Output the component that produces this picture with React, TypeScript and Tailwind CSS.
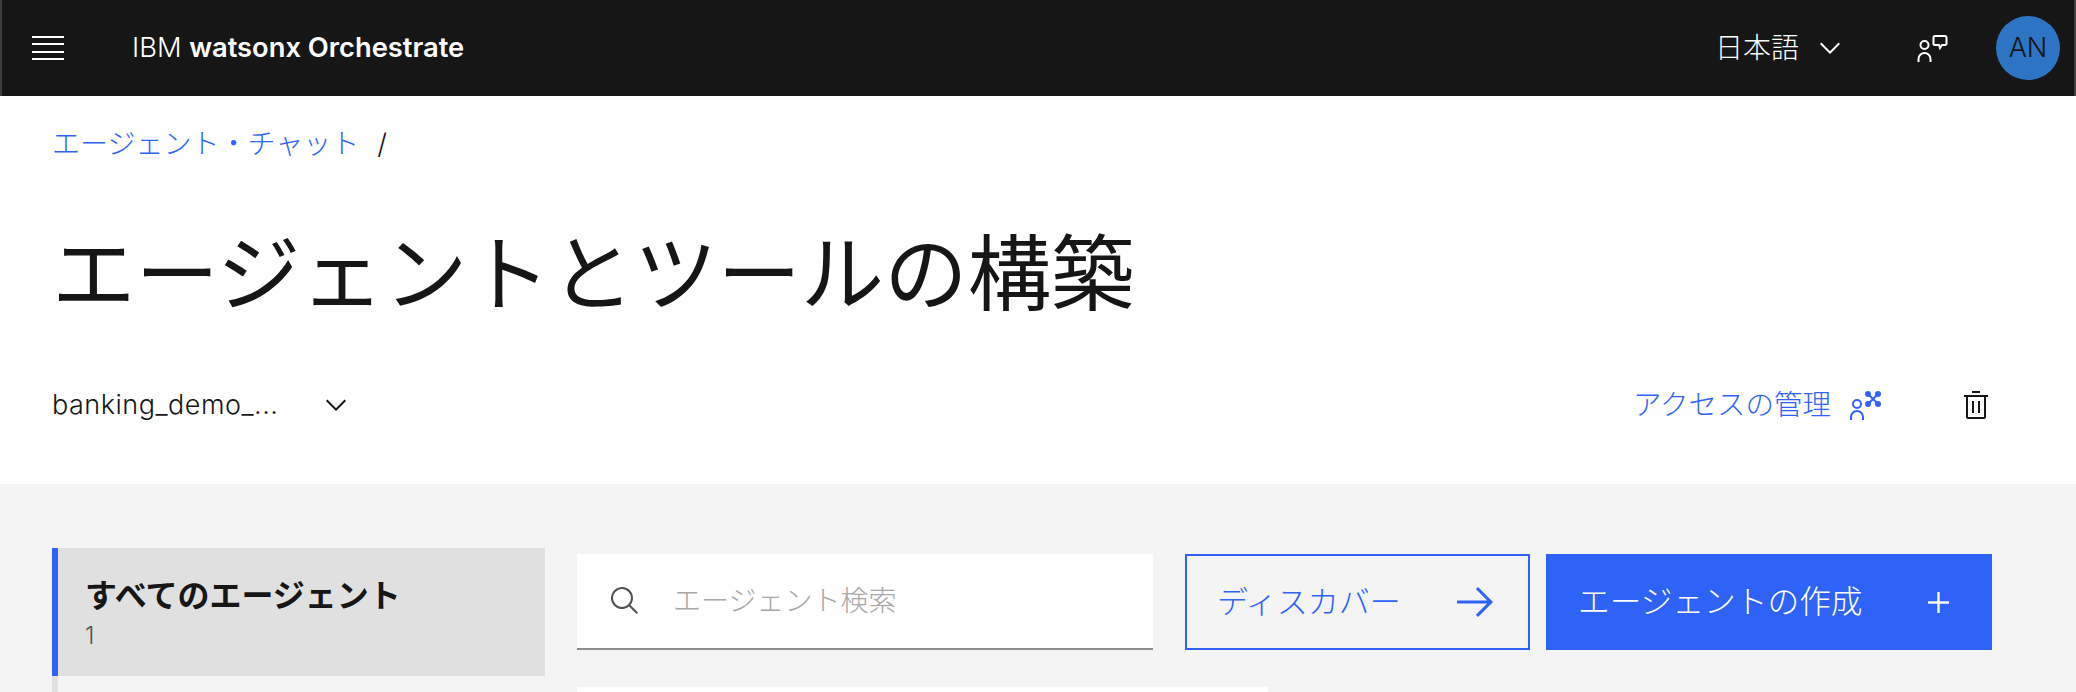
import React from "react"

const Chevron = ({ className }: { className: string }) => (
  <svg viewBox="0 0 32 32" fill="currentColor" className={className}>
    <path d="M16 22L6 12 7.4 10.6 16 19.2 24.6 10.6 26 12z" />
  </svg>
)

const sans = "[font-family:Inter,'Noto_Sans_CJK_JP',sans-serif]"

export default function App() {
  return (
    <div className={`w-[2076px] h-[692px] overflow-hidden bg-white text-[#161616] ${sans}`}>
      {/* Top bar */}
      <header className="h-[96px] bg-[#161616] border-x-2 border-[#3d3d3d] flex items-center text-white pl-[30px] pr-[14px]">
        <div className="w-[32px] h-[24px] flex flex-col justify-between">
          <div className="h-[2px] bg-white" />
          <div className="h-[2px] bg-white" />
          <div className="h-[2px] bg-white" />
          <div className="h-[2px] bg-white" />
        </div>
        <div className="ml-[68px] text-[27.3px] font-light">
          IBM <span className="font-semibold">watsonx Orchestrate</span>
        </div>
        <div className="ml-auto text-[28px] font-light leading-none">日本語</div>
        <Chevron className="w-[32px] h-[32px] ml-[15px]" />
        <svg viewBox="0 0 32 32" fill="none" stroke="currentColor" strokeWidth="2" className="w-[32px] h-[32px] ml-[71px]">
          <circle cx="7.5" cy="13" r="4" />
          <path d="M1.5 30v-3a6 6 0 0 1 12 0v3" />
          <path d="M18 4h10a1.5 1.5 0 0 1 1.5 1.5v6a1.5 1.5 0 0 1-1.5 1.5h-3l-2 3-1-3h-4a1.5 1.5 0 0 1-1.5-1.5v-6a1.5 1.5 0 0 1 1.5-1.5z" />
        </svg>
        <div className="ml-[47px] w-[64px] h-[64px] rounded-full bg-[#2d74c4] text-[#161616] flex items-center justify-center text-[27px] font-light">AN</div>
      </header>

      {/* Page heading */}
      <div className="h-[388px] pl-[52px] pr-[84px] flex flex-col">
        <div className="pt-[27px] flex items-center text-[28px] leading-[42px] font-light">
          <span className="text-[#2f63f7]">エージェント・チャット</span>
          <span className="ml-[18px]">/</span>
        </div>
        <h1 className="mt-[49px] text-[83.4px] leading-[120px] font-normal">エージェントとツールの構築</h1>
        <div className="mt-[51px] flex items-center">
          <span className="text-[27px] leading-[40px] tracking-[0.5px] font-light w-[268px]">banking_demo_...</span>
          <Chevron className="w-[32px] h-[32px]" />
          <span className="ml-auto text-[28.5px] leading-[40px] font-light text-[#2f63f7]">アクセスの管理</span>
          <svg viewBox="0 0 32 32" fill="none" stroke="#2f63f7" strokeWidth="2" className="w-[32px] h-[32px] ml-[19px]">
            <circle cx="7" cy="15" r="4" />
            <path d="M1 31v-3a6 6 0 0 1 12 0v3" />
            <path d="M18 5l10 10M28 5l-10 10" />
            <circle cx="18" cy="5" r="2" fill="#2f63f7" />
            <circle cx="28" cy="5" r="2" fill="#2f63f7" />
            <circle cx="18" cy="15" r="2" fill="#2f63f7" />
            <circle cx="28" cy="15" r="2" fill="#2f63f7" />
          </svg>
          <svg viewBox="0 0 32 32" fill="currentColor" className="w-[32px] h-[32px] ml-[78px]">
            <path d="M12 12H14V24H12zM18 12H20V24H18z" />
            <path d="M4 6V8H6V28a2 2 0 0 0 2 2H24a2 2 0 0 0 2-2V8h2V6ZM8 28V8H24V28Z" />
            <path d="M12 2H20V4H12z" />
          </svg>
        </div>
      </div>

      {/* Lower panel */}
      <div className="h-[208px] bg-[#f4f4f4] pl-[52px] pt-[64px] flex overflow-hidden">
        <div className="w-[493px] shrink-0 border-l-[6px] border-[#e0e0e0]">
          <div className="-ml-[6px] h-[128px] bg-[#e0e0e0] border-l-[6px] border-[#2f63f7] pl-[27px] pt-[26px]">
            <div className="text-[32px] leading-[44px] font-bold">すべてのエージェント</div>
            <div className="mt-[2px] text-[24px] leading-[32px] text-[#525252] font-light">1</div>
          </div>
        </div>
        <div className="ml-[32px] pt-[6px] flex-1 min-w-0">
          <div className="flex">
            <div className="w-[576px] h-[96px] bg-white border-b-2 border-[#8d8d8d] flex items-center pl-[32px]">
              <svg viewBox="0 0 32 32" fill="#525252" className="w-[32px] h-[32px]">
                <path d="M29 27.5859l-7.5521-7.5521a11.0177 11.0177 0 1 0-1.4141 1.4141L27.5859 29ZM4 13a9 9 0 1 1 9 9A9.01 9.01 0 0 1 4 13Z" />
              </svg>
              <span className="ml-[32px] text-[28px] text-[#a8a8a8] font-light">エージェント検索</span>
            </div>
            <button className="ml-[32px] w-[345px] h-[96px] border-2 border-[#2f63f7] text-[#2f63f7] flex items-center justify-between pl-[30px] pr-[29px]">
              <span className="text-[31px] font-light">ディスカバー</span>
              <svg viewBox="0 0 32 32" fill="currentColor" className="w-[48px] h-[48px]">
                <path d="M18 6L16.57 7.393 24.15 15 4 15 4 17 24.15 17 16.57 24.573 18 26 28 16 18 6z" />
              </svg>
            </button>
            <button className="ml-[16px] w-[446px] h-[96px] bg-[#2f63f7] text-white flex items-center justify-between pl-[32px] pr-[35px]">
              <span className="text-[31.7px] font-light">エージェントの作成</span>
              <svg viewBox="0 0 32 32" fill="currentColor" className="w-[37px] h-[37px]">
                <path d="M17 15L17 7 15 7 15 15 7 15 7 17 15 17 15 25 17 25 17 17 25 17 25 15 17 15z" />
              </svg>
            </button>
          </div>
          <div className="mt-[37px] w-[691px] h-[40px] bg-white" />
        </div>
      </div>
    </div>
  )
}
